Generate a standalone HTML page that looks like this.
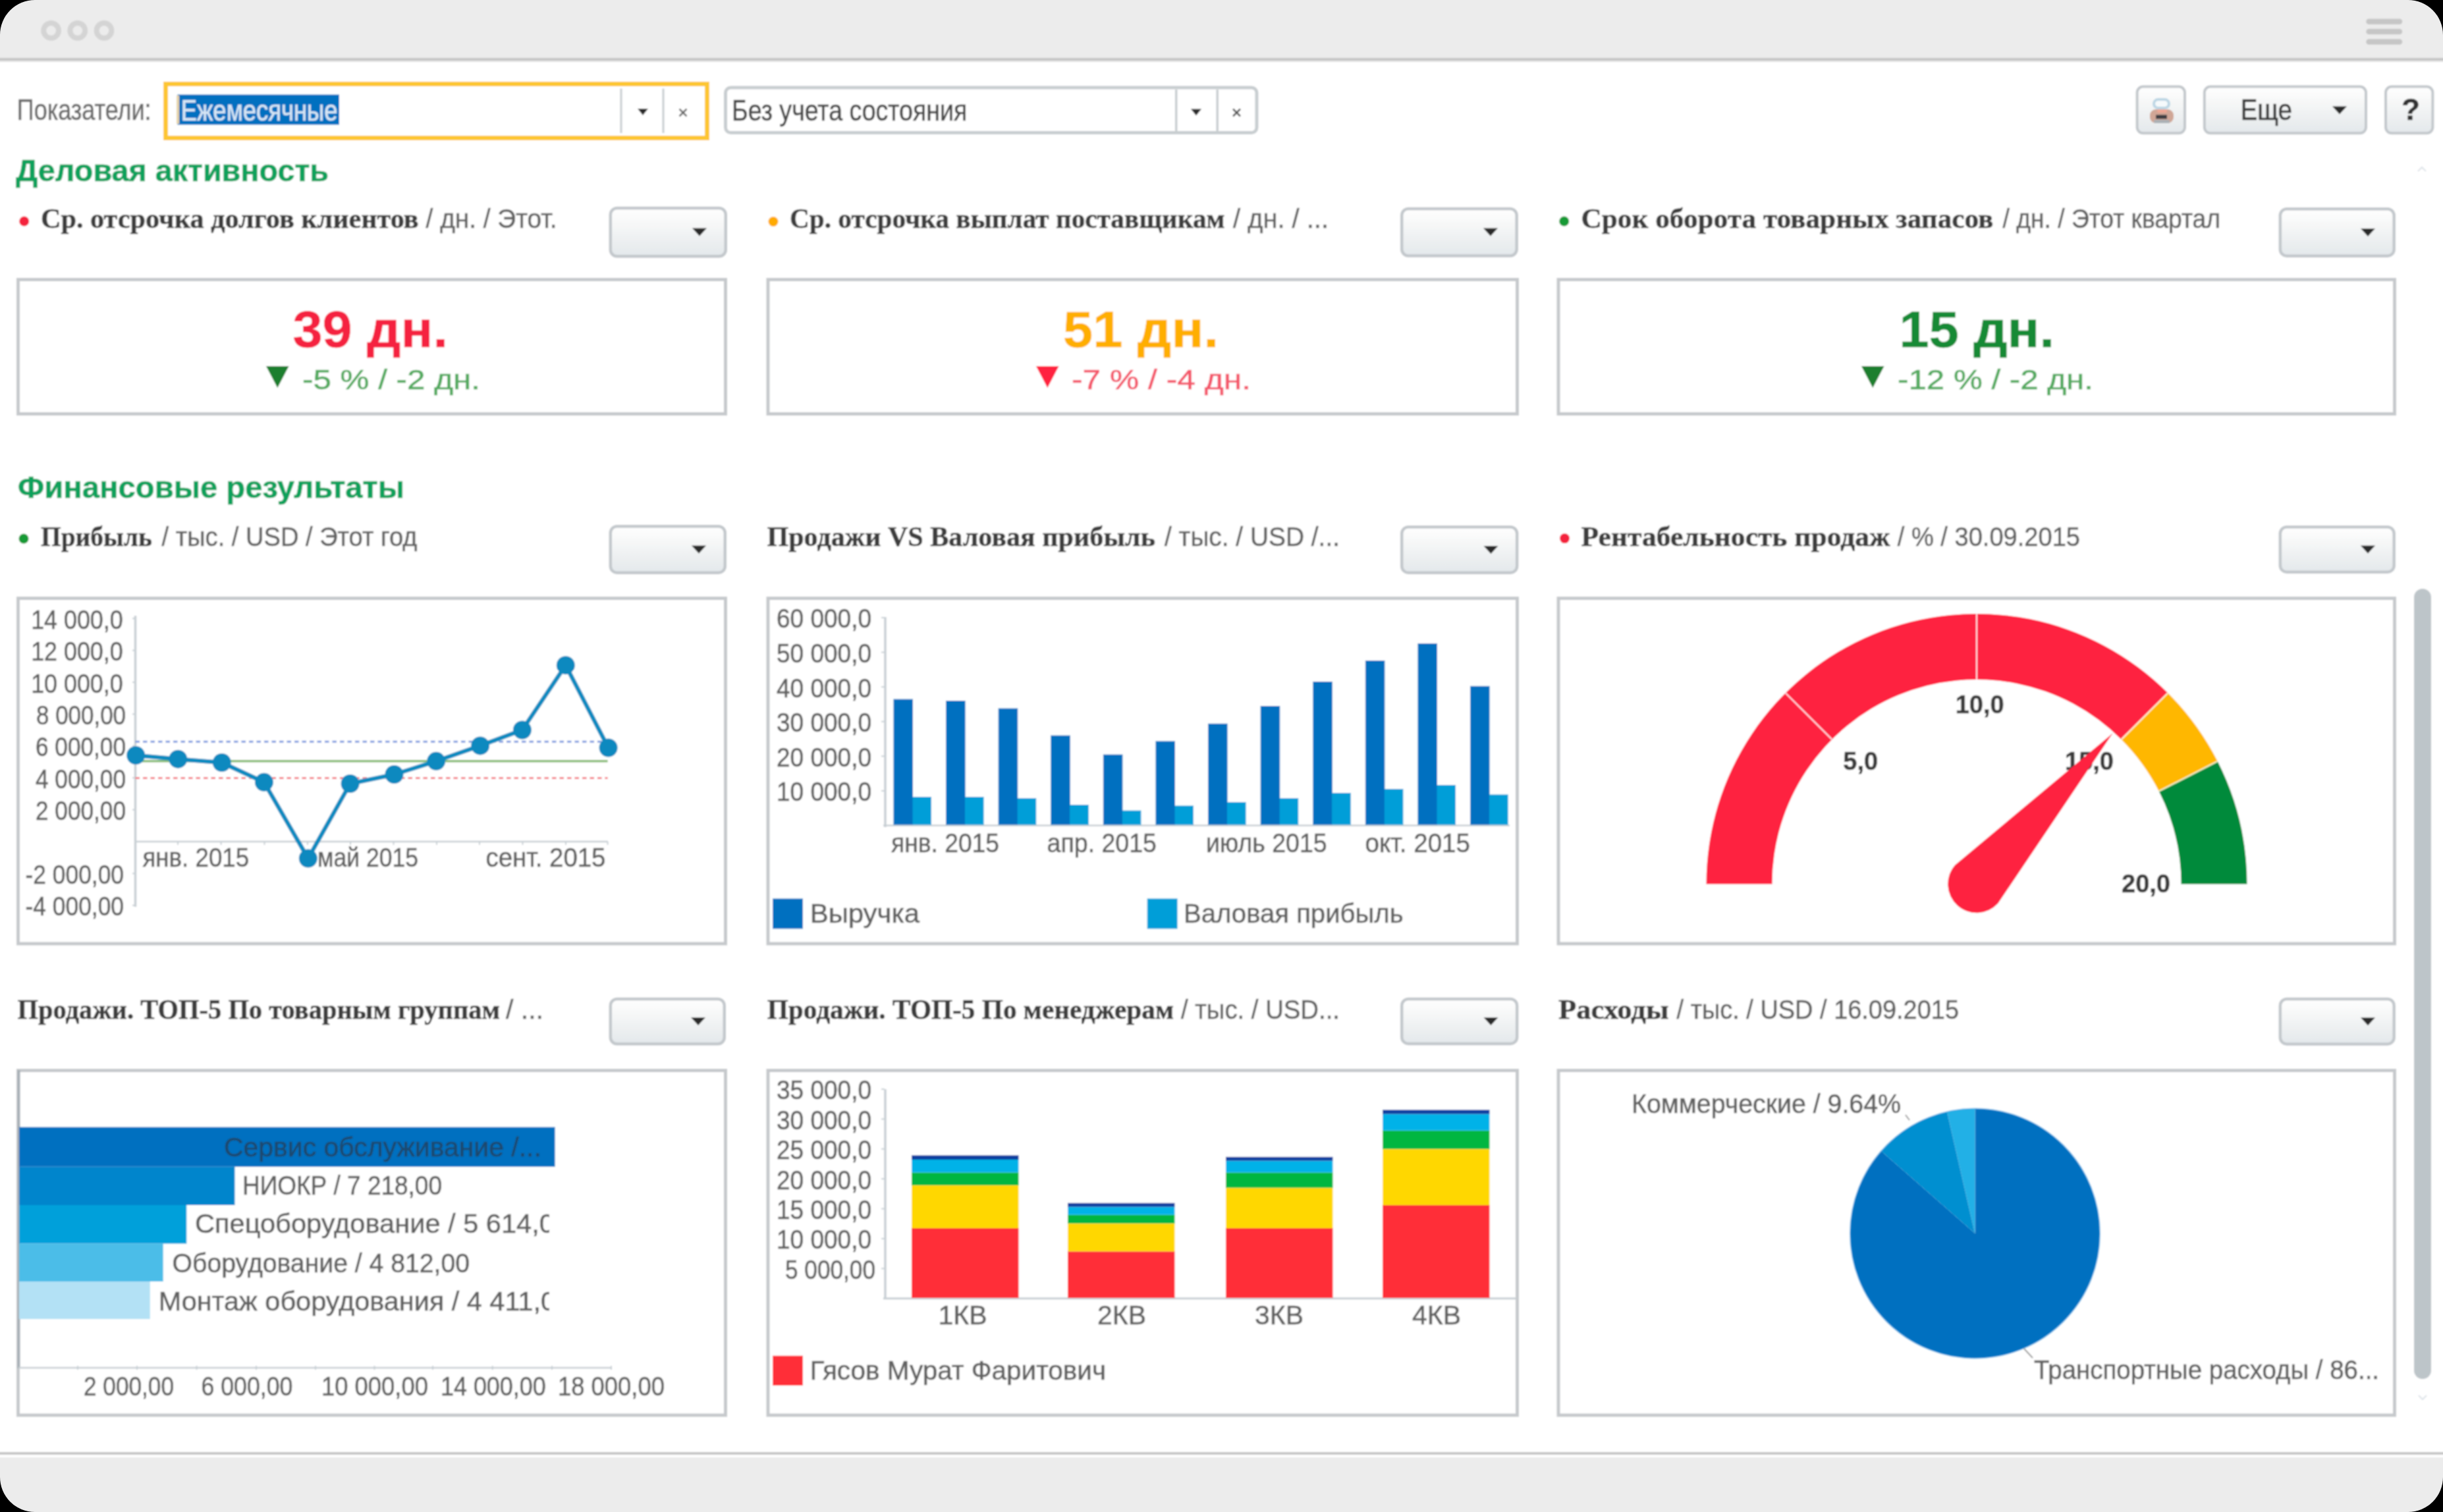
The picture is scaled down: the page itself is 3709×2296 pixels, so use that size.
<!DOCTYPE html>
<html><head><meta charset="utf-8"><title>Dashboard</title>
<style>
html,body{margin:0;padding:0;background:#fff;width:3709px;height:2296px;overflow:hidden}
svg{display:block}
.S{font-family:"Liberation Sans",sans-serif}
.R{font-family:"Liberation Serif",serif}
</style></head><body>
<svg width="3709" height="2296" viewBox="0 0 3709 2296">
<defs>
<linearGradient id="btn" x1="0" y1="0" x2="0" y2="1">
<stop offset="0" stop-color="#ffffff"/><stop offset="0.35" stop-color="#f6f7f7"/><stop offset="1" stop-color="#e3e8eb"/>
</linearGradient>
<filter id="bl" x="-2%" y="-2%" width="104%" height="104%"><feGaussianBlur stdDeviation="1.1"/></filter>
<clipPath id="c1lab"><rect x="0" y="1700" width="834" height="320"/></clipPath>
</defs>
<g filter="url(#bl)">
<rect x="-30.0" y="-30.0" width="3769.0" height="2356.0" fill="#fff"/>
<rect x="-30.0" y="-30.0" width="3769.0" height="118.0" fill="#ececec"/>
<rect x="-30.0" y="88.0" width="3769.0" height="4.0" fill="#c6c6c6"/>
<rect x="-30.0" y="92.0" width="3769.0" height="2.0" fill="#e4e4e4"/>
<circle cx="77.6" cy="46.4" r="11.4" fill="none" stroke="#d4d4d4" stroke-width="8"/>
<circle cx="117.8" cy="46.4" r="11.4" fill="none" stroke="#d4d4d4" stroke-width="8"/>
<circle cx="158" cy="46.4" r="11.4" fill="none" stroke="#d4d4d4" stroke-width="8"/>
<line x1="3596.5" y1="32.8" x2="3643" y2="32.8" stroke="#c6c6c6" stroke-width="8.5" stroke-linecap="round"/>
<line x1="3596.5" y1="48" x2="3643" y2="48" stroke="#c6c6c6" stroke-width="8.5" stroke-linecap="round"/>
<line x1="3596.5" y1="63.5" x2="3643" y2="63.5" stroke="#c6c6c6" stroke-width="8.5" stroke-linecap="round"/>
<rect x="-30.0" y="2205.0" width="3769.0" height="4.0" fill="#c6c6c6"/>
<rect x="-30.0" y="2213.0" width="3769.0" height="113.0" fill="#ececec"/>
<text class="S" x="25.8" y="182.4" font-size="44" fill="#6a6a6a" stroke="#6a6a6a" stroke-width="0.6" textLength="203.8" lengthAdjust="spacingAndGlyphs">Показатели:</text>
<rect x="251.5" y="127.5" width="822.0" height="82.0" fill="#fff" stroke="#fdc631" stroke-width="7"/>
<rect x="269.5" y="143.6" width="245.5" height="45.8" fill="#0070c0"/>
<rect x="268.0" y="145.0" width="4.0" height="43.0" fill="#e6d3a8"/>
<text class="S" x="274.7" y="183.0" font-size="44" fill="#d8e6f5" stroke="#d8e6f5" stroke-width="0.6" textLength="237.8" lengthAdjust="spacingAndGlyphs">Ежемесячные</text>
<rect x="941.5" y="134.5" width="3.0" height="67.5" fill="#c8ccd0"/>
<rect x="1005.5" y="134.5" width="3.0" height="67.5" fill="#c8ccd0"/>
<path d="M968.0,165.0 L984.0,165.0 L976.0,175.0 Z" fill="#2b2b2b"/>
<path d="M1031.5,165.5 L1042.5,176.5 M1042.5,165.5 L1031.5,176.5" stroke="#666" stroke-width="2.5"/>
<rect x="1101.5" y="133.0" width="806.5" height="68.5" fill="#fff" stroke="#c8cdd0" stroke-width="5" rx="8"/>
<text class="S" x="1111.0" y="183.0" font-size="44" fill="#474747" stroke="#474747" stroke-width="0.6" textLength="357.4" lengthAdjust="spacingAndGlyphs">Без учета состояния</text>
<rect x="1784.0" y="136.0" width="3.5" height="63.0" fill="#c8cdd0"/>
<rect x="1846.5" y="136.0" width="3.5" height="63.0" fill="#c8cdd0"/>
<path d="M1808.0,165.5 L1824.0,165.5 L1816.0,175.5 Z" fill="#2b2b2b"/>
<path d="M1872,165.5 L1883,176.5 M1883,165.5 L1872,176.5" stroke="#555" stroke-width="2.8"/>
<rect x="3244.6" y="131.6" width="72.4" height="70.7" fill="url(#btn)" stroke="#c3c8cc" stroke-width="4" rx="9"/>
<rect x="3346.8" y="131.6" width="245.2" height="70.7" fill="url(#btn)" stroke="#c3c8cc" stroke-width="4" rx="9"/>
<rect x="3622.0" y="131.6" width="71.4" height="70.7" fill="url(#btn)" stroke="#c3c8cc" stroke-width="4" rx="9"/>
<text class="S" x="3401.7" y="182.0" font-size="45" fill="#383838" stroke="#383838" stroke-width="0.6" textLength="78.3" lengthAdjust="spacingAndGlyphs">Еще</text>
<path d="M3541.0,161.5 L3563.0,161.5 L3552.0,173.5 Z" fill="#2b2b2b"/>
<text class="S" x="3646.0" y="181.5" font-size="46" fill="#333" stroke="#333" stroke-width="0.6" font-weight="bold" textLength="28.0" lengthAdjust="spacingAndGlyphs">?</text>
<g>
<rect x="3270" y="151" width="23" height="13" rx="6.5" fill="#f6fafc" stroke="#bcd6e4" stroke-width="4"/>
<rect x="3264" y="166" width="36" height="21" rx="9" fill="#d0a696"/>
<rect x="3275" y="166" width="15" height="5" rx="2" fill="#efa592"/>
<rect x="3273" y="174.5" width="17" height="6" fill="#3c3c42"/>
<rect x="3270" y="182" width="24" height="5" rx="2" fill="#aab0b5"/>
</g>
<path d="M3671,260 L3677,254 L3683,260" stroke="#dde3e8" stroke-width="2" fill="none"/>
<text class="S" x="24.0" y="275.0" font-size="46" fill="#0fa15b" stroke="#0fa15b" stroke-width="0.6" font-weight="bold" textLength="475.0" lengthAdjust="spacingAndGlyphs">Деловая активность</text>
<text class="S" x="27.0" y="756.0" font-size="46" fill="#0fa15b" stroke="#0fa15b" stroke-width="0.6" font-weight="bold" textLength="587.0" lengthAdjust="spacingAndGlyphs">Финансовые результаты</text>
<circle cx="36.7" cy="336" r="7.5" fill="#f4203e"/>
<text class="R" x="62.0" y="346.0" font-size="42" fill="#3c3c3c" stroke="#3c3c3c" stroke-width="0.6" font-weight="bold" textLength="573.6" lengthAdjust="spacingAndGlyphs">Ср. отсрочка долгов клиентов</text>
<text class="S" x="646.6" y="346.0" font-size="41" fill="#626262" stroke="#626262" stroke-width="0.6" textLength="199.0" lengthAdjust="spacingAndGlyphs">/ дн. / Этот.</text>
<circle cx="1174" cy="336.5" r="7.5" fill="#ffaa00"/>
<text class="R" x="1199.0" y="346.0" font-size="42" fill="#3c3c3c" stroke="#3c3c3c" stroke-width="0.6" font-weight="bold" textLength="660.7" lengthAdjust="spacingAndGlyphs">Ср. отсрочка выплат поставщикам</text>
<text class="S" x="1872.0" y="346.0" font-size="41" fill="#626262" stroke="#626262" stroke-width="0.6" textLength="145.0" lengthAdjust="spacingAndGlyphs">/ дн. / ...</text>
<circle cx="2374.7" cy="336" r="7.5" fill="#149a36"/>
<text class="R" x="2400.5" y="346.0" font-size="42" fill="#3c3c3c" stroke="#3c3c3c" stroke-width="0.6" font-weight="bold" textLength="626.0" lengthAdjust="spacingAndGlyphs">Срок оборота товарных запасов</text>
<text class="S" x="3040.5" y="346.0" font-size="41" fill="#626262" stroke="#626262" stroke-width="0.6" textLength="330.5" lengthAdjust="spacingAndGlyphs">/ дн. / Этот квартал</text>
<rect x="926.8" y="315.9" width="175.0" height="73.4" fill="url(#btn)" stroke="#c3c8cc" stroke-width="4.5" rx="10"/>
<path d="M1051.0,346.6 L1073.0,346.6 L1062.0,358.6 Z" fill="#2b2b2b"/>
<rect x="2128.2" y="316.9" width="174.5" height="71.6" fill="url(#btn)" stroke="#c3c8cc" stroke-width="4.5" rx="10"/>
<path d="M2252.0,346.6 L2274.0,346.6 L2263.0,358.6 Z" fill="#2b2b2b"/>
<rect x="3461.8" y="317.2" width="172.9" height="71.5" fill="url(#btn)" stroke="#c3c8cc" stroke-width="4.5" rx="10"/>
<path d="M3584.0,347.0 L3606.0,347.0 L3595.0,359.0 Z" fill="#2b2b2b"/>
<circle cx="36" cy="818" r="7.5" fill="#149a36"/>
<text class="R" x="62.0" y="829.0" font-size="42" fill="#3c3c3c" stroke="#3c3c3c" stroke-width="0.6" font-weight="bold" textLength="168.8" lengthAdjust="spacingAndGlyphs">Прибыль</text>
<text class="S" x="245.6" y="829.0" font-size="41" fill="#626262" stroke="#626262" stroke-width="0.6" textLength="388.0" lengthAdjust="spacingAndGlyphs">/ тыс. / USD / Этот год</text>
<text class="R" x="1164.5" y="829.0" font-size="42" fill="#3c3c3c" stroke="#3c3c3c" stroke-width="0.6" font-weight="bold" textLength="589.4" lengthAdjust="spacingAndGlyphs">Продажи VS Валовая прибыль</text>
<text class="S" x="1768.0" y="829.0" font-size="41" fill="#626262" stroke="#626262" stroke-width="0.6" textLength="266.0" lengthAdjust="spacingAndGlyphs">/ тыс. / USD /...</text>
<circle cx="2375.5" cy="817.6" r="7.5" fill="#f4203e"/>
<text class="R" x="2400.5" y="829.0" font-size="42" fill="#3c3c3c" stroke="#3c3c3c" stroke-width="0.6" font-weight="bold" textLength="469.1" lengthAdjust="spacingAndGlyphs">Рентабельность продаж</text>
<text class="S" x="2880.8" y="829.0" font-size="41" fill="#626262" stroke="#626262" stroke-width="0.6" textLength="277.2" lengthAdjust="spacingAndGlyphs">/ % / 30.09.2015</text>
<rect x="926.8" y="799.2" width="174.0" height="70.5" fill="url(#btn)" stroke="#c3c8cc" stroke-width="4.5" rx="10"/>
<path d="M1050.0,828.5 L1072.0,828.5 L1061.0,840.5 Z" fill="#2b2b2b"/>
<rect x="2128.2" y="800.2" width="175.0" height="69.5" fill="url(#btn)" stroke="#c3c8cc" stroke-width="4.5" rx="10"/>
<path d="M2252.5,829.0 L2274.5,829.0 L2263.5,841.0 Z" fill="#2b2b2b"/>
<rect x="3461.8" y="800.2" width="172.9" height="68.5" fill="url(#btn)" stroke="#c3c8cc" stroke-width="4.5" rx="10"/>
<path d="M3584.0,828.5 L3606.0,828.5 L3595.0,840.5 Z" fill="#2b2b2b"/>
<text class="R" x="26.5" y="1547.0" font-size="42" fill="#3c3c3c" stroke="#3c3c3c" stroke-width="0.6" font-weight="bold" textLength="732.5" lengthAdjust="spacingAndGlyphs">Продажи. ТОП-5 По товарным группам</text>
<text class="S" x="768.0" y="1547.0" font-size="41" fill="#626262" stroke="#626262" stroke-width="0.6" textLength="57.0" lengthAdjust="spacingAndGlyphs">/ ...</text>
<text class="R" x="1164.7" y="1547.0" font-size="42" fill="#3c3c3c" stroke="#3c3c3c" stroke-width="0.6" font-weight="bold" textLength="617.3" lengthAdjust="spacingAndGlyphs">Продажи. ТОП-5 По менеджерам</text>
<text class="S" x="1793.0" y="1547.0" font-size="41" fill="#626262" stroke="#626262" stroke-width="0.6" textLength="241.0" lengthAdjust="spacingAndGlyphs">/ тыс. / USD...</text>
<text class="R" x="2366.0" y="1547.0" font-size="42" fill="#3c3c3c" stroke="#3c3c3c" stroke-width="0.6" font-weight="bold" textLength="167.6" lengthAdjust="spacingAndGlyphs">Расходы</text>
<text class="S" x="2545.6" y="1547.0" font-size="41" fill="#626262" stroke="#626262" stroke-width="0.6" textLength="428.4" lengthAdjust="spacingAndGlyphs">/ тыс. / USD / 16.09.2015</text>
<rect x="926.8" y="1517.0" width="173.0" height="68.3" fill="url(#btn)" stroke="#c3c8cc" stroke-width="4.5" rx="10"/>
<path d="M1049.0,1545.1 L1071.0,1545.1 L1060.0,1557.1 Z" fill="#2b2b2b"/>
<rect x="2128.2" y="1517.0" width="175.0" height="67.9" fill="url(#btn)" stroke="#c3c8cc" stroke-width="4.5" rx="10"/>
<path d="M2252.5,1545.0 L2274.5,1545.0 L2263.5,1557.0 Z" fill="#2b2b2b"/>
<rect x="3461.8" y="1517.0" width="172.9" height="68.4" fill="url(#btn)" stroke="#c3c8cc" stroke-width="4.5" rx="10"/>
<path d="M3584.0,1545.2 L3606.0,1545.2 L3595.0,1557.2 Z" fill="#2b2b2b"/>
<rect x="27.5" y="424.5" width="1074.0" height="204.0" fill="#fff" stroke="#c6c9cc" stroke-width="5"/>
<rect x="27.5" y="908.5" width="1074.0" height="524.5" fill="#fff" stroke="#c6c9cc" stroke-width="5"/>
<rect x="27.5" y="1625.5" width="1074.0" height="523.5" fill="#fff" stroke="#c6c9cc" stroke-width="5"/>
<rect x="1166.0" y="424.5" width="1137.5" height="204.0" fill="#fff" stroke="#c6c9cc" stroke-width="5"/>
<rect x="1166.0" y="908.5" width="1137.5" height="524.5" fill="#fff" stroke="#c6c9cc" stroke-width="5"/>
<rect x="1166.0" y="1625.5" width="1137.5" height="523.5" fill="#fff" stroke="#c6c9cc" stroke-width="5"/>
<rect x="2366.0" y="424.5" width="1269.5" height="204.0" fill="#fff" stroke="#c6c9cc" stroke-width="5"/>
<rect x="2366.0" y="908.5" width="1269.5" height="524.5" fill="#fff" stroke="#c6c9cc" stroke-width="5"/>
<rect x="2366.0" y="1625.5" width="1269.5" height="523.5" fill="#fff" stroke="#c6c9cc" stroke-width="5"/>
<rect x="3665.0" y="894.0" width="26.0" height="1200.0" fill="#bdc5c9" rx="13"/>
<path d="M3672,2119 L3678,2125 L3684,2119" stroke="#dde3e8" stroke-width="2" fill="none"/>
<text class="S" x="444.5" y="526.7" font-size="78" fill="#f5203f" stroke="#f5203f" stroke-width="0.6" font-weight="bold" textLength="235.5" lengthAdjust="spacingAndGlyphs">39 дн.</text>
<path d="M404.0,556 L438.6,556 L421.3,589 Z" fill="#1a7f2e"/>
<text class="S" x="459.0" y="590.6" font-size="43" fill="#52aa5e" stroke="#52aa5e" stroke-width="0.6" textLength="270.0" lengthAdjust="spacingAndGlyphs">-5 % / -2 дн.</text>
<text class="S" x="1614.0" y="526.7" font-size="78" fill="#ffae00" stroke="#ffae00" stroke-width="0.6" font-weight="bold" textLength="236.0" lengthAdjust="spacingAndGlyphs">51 дн.</text>
<path d="M1573.0,556 L1607.6,556 L1590.3,589 Z" fill="#ff2040"/>
<text class="S" x="1627.0" y="590.6" font-size="43" fill="#f4566a" stroke="#f4566a" stroke-width="0.6" textLength="272.0" lengthAdjust="spacingAndGlyphs">-7 % / -4 дн.</text>
<text class="S" x="2883.6" y="526.7" font-size="78" fill="#138a36" stroke="#138a36" stroke-width="0.6" font-weight="bold" textLength="235.4" lengthAdjust="spacingAndGlyphs">15 дн.</text>
<path d="M2826.0,556 L2860.6,556 L2843.3,589 Z" fill="#1a7f2e"/>
<text class="S" x="2881.0" y="590.6" font-size="43" fill="#52aa5e" stroke="#52aa5e" stroke-width="0.6" textLength="297.0" lengthAdjust="spacingAndGlyphs">-12 % / -2 дн.</text>
<line x1="205.5" y1="935" x2="205.5" y2="1377" stroke="#c8cfd4" stroke-width="3.5"/>
<line x1="204" y1="1278" x2="923" y2="1278" stroke="#c8cfd4" stroke-width="2.5"/>
<line x1="270" y1="1278" x2="270" y2="1283" stroke="#c8cfd4" stroke-width="2"/>
<line x1="335.6" y1="1278" x2="335.6" y2="1283" stroke="#c8cfd4" stroke-width="2"/>
<line x1="401.5" y1="1278" x2="401.5" y2="1283" stroke="#c8cfd4" stroke-width="2"/>
<line x1="466.9" y1="1278" x2="466.9" y2="1283" stroke="#c8cfd4" stroke-width="2"/>
<line x1="532" y1="1278" x2="532" y2="1283" stroke="#c8cfd4" stroke-width="2"/>
<line x1="597.5" y1="1278" x2="597.5" y2="1283" stroke="#c8cfd4" stroke-width="2"/>
<line x1="663" y1="1278" x2="663" y2="1283" stroke="#c8cfd4" stroke-width="2"/>
<line x1="728" y1="1278" x2="728" y2="1283" stroke="#c8cfd4" stroke-width="2"/>
<line x1="793.5" y1="1278" x2="793.5" y2="1283" stroke="#c8cfd4" stroke-width="2"/>
<line x1="859" y1="1278" x2="859" y2="1283" stroke="#c8cfd4" stroke-width="2"/>
<line x1="922.6" y1="1278" x2="922.6" y2="1283" stroke="#c8cfd4" stroke-width="2"/>
<line x1="201" y1="1374.8" x2="205.5" y2="1374.8" stroke="#c8cfd4" stroke-width="2"/>
<line x1="201" y1="1326.4" x2="205.5" y2="1326.4" stroke="#c8cfd4" stroke-width="2"/>
<line x1="201" y1="1229.6" x2="205.5" y2="1229.6" stroke="#c8cfd4" stroke-width="2"/>
<line x1="201" y1="1181.2" x2="205.5" y2="1181.2" stroke="#c8cfd4" stroke-width="2"/>
<line x1="201" y1="1132.8" x2="205.5" y2="1132.8" stroke="#c8cfd4" stroke-width="2"/>
<line x1="201" y1="1084.4" x2="205.5" y2="1084.4" stroke="#c8cfd4" stroke-width="2"/>
<line x1="201" y1="1036.0" x2="205.5" y2="1036.0" stroke="#c8cfd4" stroke-width="2"/>
<line x1="201" y1="987.6" x2="205.5" y2="987.6" stroke="#c8cfd4" stroke-width="2"/>
<line x1="201" y1="939.2" x2="205.5" y2="939.2" stroke="#c8cfd4" stroke-width="2"/>
<text class="S" x="47.2" y="954.7" font-size="41" fill="#606060" stroke="#606060" stroke-width="0.6" textLength="139.5" lengthAdjust="spacingAndGlyphs">14 000,0</text>
<text class="S" x="47.2" y="1003.1" font-size="41" fill="#606060" stroke="#606060" stroke-width="0.6" textLength="139.5" lengthAdjust="spacingAndGlyphs">12 000,0</text>
<text class="S" x="47.2" y="1051.5" font-size="41" fill="#606060" stroke="#606060" stroke-width="0.6" textLength="139.5" lengthAdjust="spacingAndGlyphs">10 000,0</text>
<text class="S" x="55.0" y="1099.9" font-size="41" fill="#606060" stroke="#606060" stroke-width="0.6" textLength="136.0" lengthAdjust="spacingAndGlyphs">8 000,00</text>
<text class="S" x="54.0" y="1148.3" font-size="41" fill="#606060" stroke="#606060" stroke-width="0.6" textLength="137.0" lengthAdjust="spacingAndGlyphs">6 000,00</text>
<text class="S" x="54.0" y="1196.7" font-size="41" fill="#606060" stroke="#606060" stroke-width="0.6" textLength="137.0" lengthAdjust="spacingAndGlyphs">4 000,00</text>
<text class="S" x="54.0" y="1245.1" font-size="41" fill="#606060" stroke="#606060" stroke-width="0.6" textLength="137.0" lengthAdjust="spacingAndGlyphs">2 000,00</text>
<text class="S" x="38.6" y="1341.9" font-size="41" fill="#606060" stroke="#606060" stroke-width="0.6" textLength="149.4" lengthAdjust="spacingAndGlyphs">-2 000,00</text>
<text class="S" x="38.6" y="1390.3" font-size="41" fill="#606060" stroke="#606060" stroke-width="0.6" textLength="149.4" lengthAdjust="spacingAndGlyphs">-4 000,00</text>
<line x1="205.5" y1="1126.2" x2="922.6" y2="1126.2" stroke="#7f9be0" stroke-width="3" stroke-dasharray="6.5,5"/>
<line x1="205.5" y1="1155.8" x2="922.6" y2="1155.8" stroke="#86bb74" stroke-width="3.5"/>
<line x1="205.5" y1="1181.6" x2="922.6" y2="1181.6" stroke="#f47f86" stroke-width="3" stroke-dasharray="6.5,5"/>
<polyline points="206.2,1147 270.3,1152.7 336.8,1158 400.9,1187.8 467.8,1303.5 531.6,1190 598.5,1176 662.2,1155.8 729.1,1132.4 792.9,1108.5 858.8,1010.2 923.6,1135.5" fill="none" stroke="#0f8bc0" stroke-width="6.5" stroke-linejoin="round"/>
<circle cx="206.2" cy="1147" r="14" fill="#0d89bf"/>
<circle cx="270.3" cy="1152.7" r="14" fill="#0d89bf"/>
<circle cx="336.8" cy="1158" r="14" fill="#0d89bf"/>
<circle cx="400.9" cy="1187.8" r="14" fill="#0d89bf"/>
<circle cx="467.8" cy="1303.5" r="14" fill="#0d89bf"/>
<circle cx="531.6" cy="1190" r="14" fill="#0d89bf"/>
<circle cx="598.5" cy="1176" r="14" fill="#0d89bf"/>
<circle cx="662.2" cy="1155.8" r="14" fill="#0d89bf"/>
<circle cx="729.1" cy="1132.4" r="14" fill="#0d89bf"/>
<circle cx="792.9" cy="1108.5" r="14" fill="#0d89bf"/>
<circle cx="858.8" cy="1010.2" r="14" fill="#0d89bf"/>
<circle cx="923.6" cy="1135.5" r="14" fill="#0d89bf"/>
<text class="S" x="216.4" y="1316.0" font-size="41" fill="#606060" stroke="#606060" stroke-width="0.6" textLength="161.8" lengthAdjust="spacingAndGlyphs">янв. 2015</text>
<text class="S" x="482.0" y="1316.0" font-size="41" fill="#606060" stroke="#606060" stroke-width="0.6" textLength="152.9" lengthAdjust="spacingAndGlyphs">май 2015</text>
<text class="S" x="737.5" y="1316.0" font-size="41" fill="#606060" stroke="#606060" stroke-width="0.6" textLength="182.0" lengthAdjust="spacingAndGlyphs">сент. 2015</text>
<line x1="1344" y1="937" x2="1344" y2="1256" stroke="#c8cfd4" stroke-width="3.5"/>
<line x1="1341" y1="1253.5" x2="2292" y2="1253.5" stroke="#c8cfd4" stroke-width="2.5"/>
<text class="S" x="1179.0" y="953.4" font-size="41" fill="#606060" stroke="#606060" stroke-width="0.6" textLength="144.0" lengthAdjust="spacingAndGlyphs">60 000,0</text>
<line x1="1338" y1="937.9" x2="1343" y2="937.9" stroke="#c8cfd4" stroke-width="2"/>
<text class="S" x="1179.0" y="1006.0" font-size="41" fill="#606060" stroke="#606060" stroke-width="0.6" textLength="144.0" lengthAdjust="spacingAndGlyphs">50 000,0</text>
<line x1="1338" y1="990.5" x2="1343" y2="990.5" stroke="#c8cfd4" stroke-width="2"/>
<text class="S" x="1179.0" y="1058.6" font-size="41" fill="#606060" stroke="#606060" stroke-width="0.6" textLength="144.0" lengthAdjust="spacingAndGlyphs">40 000,0</text>
<line x1="1338" y1="1043.1" x2="1343" y2="1043.1" stroke="#c8cfd4" stroke-width="2"/>
<text class="S" x="1179.0" y="1111.2" font-size="41" fill="#606060" stroke="#606060" stroke-width="0.6" textLength="144.0" lengthAdjust="spacingAndGlyphs">30 000,0</text>
<line x1="1338" y1="1095.7" x2="1343" y2="1095.7" stroke="#c8cfd4" stroke-width="2"/>
<text class="S" x="1179.0" y="1163.8" font-size="41" fill="#606060" stroke="#606060" stroke-width="0.6" textLength="144.0" lengthAdjust="spacingAndGlyphs">20 000,0</text>
<line x1="1338" y1="1148.3" x2="1343" y2="1148.3" stroke="#c8cfd4" stroke-width="2"/>
<text class="S" x="1179.0" y="1216.4" font-size="41" fill="#606060" stroke="#606060" stroke-width="0.6" textLength="144.0" lengthAdjust="spacingAndGlyphs">10 000,0</text>
<line x1="1338" y1="1200.9" x2="1343" y2="1200.9" stroke="#c8cfd4" stroke-width="2"/>
<rect x="1356.5" y="1061.6" width="29.5" height="190.9" fill="#0070c0"/>
<rect x="1385.5" y="1210.0" width="28.5" height="42.5" fill="#009ed8"/>
<rect x="1436.1" y="1064.0" width="29.5" height="188.5" fill="#0070c0"/>
<rect x="1465.1" y="1210.0" width="28.5" height="42.5" fill="#009ed8"/>
<rect x="1515.7" y="1075.6" width="29.5" height="176.9" fill="#0070c0"/>
<rect x="1544.7" y="1212.0" width="28.5" height="40.5" fill="#009ed8"/>
<rect x="1595.3" y="1116.7" width="29.5" height="135.8" fill="#0070c0"/>
<rect x="1624.3" y="1222.0" width="28.5" height="30.5" fill="#009ed8"/>
<rect x="1674.9" y="1145.7" width="29.5" height="106.8" fill="#0070c0"/>
<rect x="1703.9" y="1230.7" width="28.5" height="21.8" fill="#009ed8"/>
<rect x="1754.5" y="1125.4" width="29.5" height="127.1" fill="#0070c0"/>
<rect x="1783.5" y="1223.4" width="28.5" height="29.1" fill="#009ed8"/>
<rect x="1834.1" y="1098.8" width="29.5" height="153.7" fill="#0070c0"/>
<rect x="1863.1" y="1218.0" width="28.5" height="34.5" fill="#009ed8"/>
<rect x="1913.7" y="1072.0" width="29.5" height="180.5" fill="#0070c0"/>
<rect x="1942.7" y="1212.0" width="28.5" height="40.5" fill="#009ed8"/>
<rect x="1993.3" y="1035.0" width="29.5" height="217.5" fill="#0070c0"/>
<rect x="2022.3" y="1204.0" width="28.5" height="48.5" fill="#009ed8"/>
<rect x="2072.9" y="1003.0" width="29.5" height="249.5" fill="#0070c0"/>
<rect x="2101.9" y="1198.0" width="28.5" height="54.5" fill="#009ed8"/>
<rect x="2152.5" y="977.0" width="29.5" height="275.5" fill="#0070c0"/>
<rect x="2181.5" y="1192.0" width="28.5" height="60.5" fill="#009ed8"/>
<rect x="2232.1" y="1041.8" width="29.5" height="210.7" fill="#0070c0"/>
<rect x="2261.1" y="1206.5" width="28.5" height="46.0" fill="#009ed8"/>
<text class="S" x="1353.0" y="1294.0" font-size="41" fill="#606060" stroke="#606060" stroke-width="0.6" textLength="164.0" lengthAdjust="spacingAndGlyphs">янв. 2015</text>
<text class="S" x="1589.6" y="1294.0" font-size="41" fill="#606060" stroke="#606060" stroke-width="0.6" textLength="166.4" lengthAdjust="spacingAndGlyphs">апр. 2015</text>
<text class="S" x="1831.0" y="1294.0" font-size="41" fill="#606060" stroke="#606060" stroke-width="0.6" textLength="183.7" lengthAdjust="spacingAndGlyphs">июль 2015</text>
<text class="S" x="2072.6" y="1294.0" font-size="41" fill="#606060" stroke="#606060" stroke-width="0.6" textLength="159.4" lengthAdjust="spacingAndGlyphs">окт. 2015</text>
<rect x="1173.0" y="1364.5" width="46.0" height="45.9" fill="#0070c0"/>
<text class="S" x="1229.7" y="1401.0" font-size="41" fill="#606060" stroke="#606060" stroke-width="0.6" textLength="166.3" lengthAdjust="spacingAndGlyphs">Выручка</text>
<rect x="1741.7" y="1364.5" width="45.9" height="45.9" fill="#009ed8"/>
<text class="S" x="1797.0" y="1401.0" font-size="41" fill="#606060" stroke="#606060" stroke-width="0.6" textLength="333.6" lengthAdjust="spacingAndGlyphs">Валовая прибыль</text>
<path d="M2590.5,1342.5 A410.5,410.5 0 0 1 3291.3,1052.2 L3220.6,1122.9 A310.5,310.5 0 0 0 2690.5,1342.5 Z" fill="#fe2140"/>
<path d="M3291.3,1052.2 A410.5,410.5 0 0 1 3366.8,1156.1 L3277.7,1201.5 A310.5,310.5 0 0 0 3220.6,1122.9 Z" fill="#ffb700"/>
<path d="M3366.8,1156.1 A410.5,410.5 0 0 1 3411.5,1342.5 L3311.5,1342.5 A310.5,310.5 0 0 0 3277.7,1201.5 Z" fill="#008a3a"/>
<line x1="2781.4" y1="1122.9" x2="2710.7" y2="1052.2" stroke="#ffd9dd" stroke-width="2.2"/>
<line x1="3001.0" y1="1032.0" x2="3001.0" y2="932.0" stroke="#ffd9dd" stroke-width="2.2"/>
<line x1="3220.6" y1="1122.9" x2="3291.3" y2="1052.2" stroke="#fff0d8" stroke-width="2.2"/>
<line x1="3277.7" y1="1201.5" x2="3366.8" y2="1156.1" stroke="#f2f0c8" stroke-width="2.2"/>
<text class="S" x="3005.7" y="1082.5" font-size="38" fill="#3a3a3a" stroke="#3a3a3a" stroke-width="0.6" font-weight="bold" text-anchor="middle">10,0</text>
<text class="S" x="2824.7" y="1169.0" font-size="38" fill="#3a3a3a" stroke="#3a3a3a" stroke-width="0.6" font-weight="bold" text-anchor="middle">5,0</text>
<text class="S" x="3172.0" y="1169.0" font-size="38" fill="#3a3a3a" stroke="#3a3a3a" stroke-width="0.6" font-weight="bold" text-anchor="middle">15,0</text>
<text class="S" x="3258.0" y="1354.5" font-size="38" fill="#3a3a3a" stroke="#3a3a3a" stroke-width="0.6" font-weight="bold" text-anchor="middle">20,0</text>
<path d="M3207.5,1113.4 L3033.5,1371.8 A43.7,43.7 0 1 1 2968.5,1313.2 Z" fill="#fe2140"/>
<line x1="28.5" y1="1625" x2="28.5" y2="2078" stroke="#a7b0b6" stroke-width="4"/>
<line x1="28" y1="2077" x2="928" y2="2077" stroke="#c8cfd4" stroke-width="2.5"/>
<line x1="118" y1="2074" x2="118" y2="2080" stroke="#c8cfd4" stroke-width="2"/>
<line x1="208" y1="2074" x2="208" y2="2080" stroke="#c8cfd4" stroke-width="2"/>
<line x1="298.6" y1="2074" x2="298.6" y2="2080" stroke="#c8cfd4" stroke-width="2"/>
<line x1="389" y1="2074" x2="389" y2="2080" stroke="#c8cfd4" stroke-width="2"/>
<line x1="479" y1="2074" x2="479" y2="2080" stroke="#c8cfd4" stroke-width="2"/>
<line x1="568.5" y1="2074" x2="568.5" y2="2080" stroke="#c8cfd4" stroke-width="2"/>
<line x1="657" y1="2074" x2="657" y2="2080" stroke="#c8cfd4" stroke-width="2"/>
<line x1="747.7" y1="2074" x2="747.7" y2="2080" stroke="#c8cfd4" stroke-width="2"/>
<line x1="838" y1="2074" x2="838" y2="2080" stroke="#c8cfd4" stroke-width="2"/>
<line x1="928" y1="2074" x2="928" y2="2080" stroke="#c8cfd4" stroke-width="2"/>
<rect x="29.0" y="1711.5" width="813.6" height="60.2" fill="#0070c0"/>
<rect x="29.0" y="1771.7" width="327.5" height="58.3" fill="#0085cc"/>
<rect x="29.0" y="1830.0" width="254.3" height="58.5" fill="#00a0da"/>
<rect x="29.0" y="1888.5" width="218.7" height="57.5" fill="#4bbde8"/>
<rect x="29.0" y="1946.0" width="198.8" height="57.0" fill="#b3e1f5"/>
<g clip-path="url(#c1lab)">
<text class="S" x="340.0" y="1756.0" font-size="41" fill="#1d4a6e" stroke="#1d4a6e" stroke-width="0.6" textLength="481.8" lengthAdjust="spacingAndGlyphs">Сервис обслуживание /...</text>
<text class="S" x="368.0" y="1814.0" font-size="41" fill="#606060" stroke="#606060" stroke-width="0.6" textLength="303.0" lengthAdjust="spacingAndGlyphs">НИОКР / 7 218,00</text>
<text class="S" x="296.0" y="1872.0" font-size="41" fill="#606060" stroke="#606060" stroke-width="0.6" textLength="569.0" lengthAdjust="spacingAndGlyphs">Спецоборудование / 5 614,00</text>
<text class="S" x="261.6" y="1932.0" font-size="41" fill="#606060" stroke="#606060" stroke-width="0.6" textLength="451.4" lengthAdjust="spacingAndGlyphs">Оборудование / 4 812,00</text>
<text class="S" x="240.7" y="1990.0" font-size="41" fill="#606060" stroke="#606060" stroke-width="0.6" textLength="626.3" lengthAdjust="spacingAndGlyphs">Монтаж оборудования / 4 411,00</text>
</g>
<text class="S" x="127.0" y="2119.0" font-size="41" fill="#606060" stroke="#606060" stroke-width="0.6" textLength="137.0" lengthAdjust="spacingAndGlyphs">2 000,00</text>
<text class="S" x="305.5" y="2119.0" font-size="41" fill="#606060" stroke="#606060" stroke-width="0.6" textLength="138.9" lengthAdjust="spacingAndGlyphs">6 000,00</text>
<text class="S" x="488.0" y="2119.0" font-size="41" fill="#606060" stroke="#606060" stroke-width="0.6" textLength="162.0" lengthAdjust="spacingAndGlyphs">10 000,00</text>
<text class="S" x="669.0" y="2119.0" font-size="41" fill="#606060" stroke="#606060" stroke-width="0.6" textLength="159.7" lengthAdjust="spacingAndGlyphs">14 000,00</text>
<text class="S" x="847.0" y="2119.0" font-size="41" fill="#606060" stroke="#606060" stroke-width="0.6" textLength="162.0" lengthAdjust="spacingAndGlyphs">18 000,00</text>
<line x1="1344" y1="1654" x2="1344" y2="1973" stroke="#c8cfd4" stroke-width="3.5"/>
<line x1="1341" y1="1971.7" x2="2302" y2="1971.7" stroke="#c8cfd4" stroke-width="3"/>
<text class="S" x="1179.0" y="1669.4" font-size="41" fill="#606060" stroke="#606060" stroke-width="0.6" textLength="144.0" lengthAdjust="spacingAndGlyphs">35 000,0</text>
<line x1="1338" y1="1653.9" x2="1343" y2="1653.9" stroke="#c8cfd4" stroke-width="2"/>
<text class="S" x="1179.0" y="1714.8" font-size="41" fill="#606060" stroke="#606060" stroke-width="0.6" textLength="144.0" lengthAdjust="spacingAndGlyphs">30 000,0</text>
<line x1="1338" y1="1699.3" x2="1343" y2="1699.3" stroke="#c8cfd4" stroke-width="2"/>
<text class="S" x="1179.0" y="1760.2" font-size="41" fill="#606060" stroke="#606060" stroke-width="0.6" textLength="144.0" lengthAdjust="spacingAndGlyphs">25 000,0</text>
<line x1="1338" y1="1744.7" x2="1343" y2="1744.7" stroke="#c8cfd4" stroke-width="2"/>
<text class="S" x="1179.0" y="1805.6" font-size="41" fill="#606060" stroke="#606060" stroke-width="0.6" textLength="144.0" lengthAdjust="spacingAndGlyphs">20 000,0</text>
<line x1="1338" y1="1790.1" x2="1343" y2="1790.1" stroke="#c8cfd4" stroke-width="2"/>
<text class="S" x="1179.0" y="1851.0" font-size="41" fill="#606060" stroke="#606060" stroke-width="0.6" textLength="144.0" lengthAdjust="spacingAndGlyphs">15 000,0</text>
<line x1="1338" y1="1835.5" x2="1343" y2="1835.5" stroke="#c8cfd4" stroke-width="2"/>
<text class="S" x="1179.0" y="1896.4" font-size="41" fill="#606060" stroke="#606060" stroke-width="0.6" textLength="144.0" lengthAdjust="spacingAndGlyphs">10 000,0</text>
<line x1="1338" y1="1880.9" x2="1343" y2="1880.9" stroke="#c8cfd4" stroke-width="2"/>
<text class="S" x="1192.0" y="1941.8" font-size="41" fill="#606060" stroke="#606060" stroke-width="0.6" textLength="137.0" lengthAdjust="spacingAndGlyphs">5 000,00</text>
<line x1="1338" y1="1926.3" x2="1343" y2="1926.3" stroke="#c8cfd4" stroke-width="2"/>
<rect x="1384.0" y="1865.0" width="162.5" height="106.0" fill="#ff2f37"/>
<rect x="1384.0" y="1799.8" width="162.5" height="65.2" fill="#ffd700"/>
<rect x="1384.0" y="1780.5" width="162.5" height="19.3" fill="#00b640"/>
<rect x="1384.0" y="1761.0" width="162.5" height="19.5" fill="#00b2e8"/>
<rect x="1384.0" y="1754.4" width="162.5" height="6.6" fill="#0d3fa0"/>
<rect x="1621.0" y="1900.3" width="162.5" height="70.7" fill="#ff2f37"/>
<rect x="1621.0" y="1857.7" width="162.5" height="42.6" fill="#ffd700"/>
<rect x="1621.0" y="1844.7" width="162.5" height="13.0" fill="#00b640"/>
<rect x="1621.0" y="1832.6" width="162.5" height="12.1" fill="#00b2e8"/>
<rect x="1621.0" y="1826.8" width="162.5" height="5.8" fill="#0d3fa0"/>
<rect x="1861.0" y="1865.0" width="162.5" height="106.0" fill="#ff2f37"/>
<rect x="1861.0" y="1803.6" width="162.5" height="61.4" fill="#ffd700"/>
<rect x="1861.0" y="1780.5" width="162.5" height="23.1" fill="#00b640"/>
<rect x="1861.0" y="1762.6" width="162.5" height="17.9" fill="#00b2e8"/>
<rect x="1861.0" y="1756.8" width="162.5" height="5.8" fill="#0d3fa0"/>
<rect x="2099.0" y="1830.0" width="162.5" height="141.0" fill="#ff2f37"/>
<rect x="2099.0" y="1744.7" width="162.5" height="85.3" fill="#ffd700"/>
<rect x="2099.0" y="1716.7" width="162.5" height="28.0" fill="#00b640"/>
<rect x="2099.0" y="1691.6" width="162.5" height="25.1" fill="#00b2e8"/>
<rect x="2099.0" y="1685.3" width="162.5" height="6.3" fill="#0d3fa0"/>
<text class="S" x="1461.6" y="2011.0" font-size="41" fill="#606060" stroke="#606060" stroke-width="0.6" text-anchor="middle">1КВ</text>
<text class="S" x="1703.0" y="2011.0" font-size="41" fill="#606060" stroke="#606060" stroke-width="0.6" text-anchor="middle">2КВ</text>
<text class="S" x="1942.0" y="2011.0" font-size="41" fill="#606060" stroke="#606060" stroke-width="0.6" text-anchor="middle">3КВ</text>
<text class="S" x="2181.0" y="2011.0" font-size="41" fill="#606060" stroke="#606060" stroke-width="0.6" text-anchor="middle">4КВ</text>
<rect x="1173.0" y="2058.7" width="46.0" height="45.3" fill="#ff2f37"/>
<text class="S" x="1229.7" y="2095.0" font-size="41" fill="#606060" stroke="#606060" stroke-width="0.6" textLength="449.3" lengthAdjust="spacingAndGlyphs">Гясов Мурат Фаритович</text>
<path d="M2998.5,1873 L2998.5,1683.5 A189.5,189.5 0 1 1 2856.1,1747.9 Z" fill="#0070c0"/>
<path d="M2998.5,1873 L2856.1,1747.9 A189.5,189.5 0 0 1 2956.2,1688.3 Z" fill="#008fd0"/>
<path d="M2998.5,1873 L2956.2,1688.3 A189.5,189.5 0 0 1 2998.5,1683.5 Z" fill="#22b0e6"/>
<circle cx="2998.5" cy="1873" r="189.5" fill="none" stroke="#2a9fe0" stroke-opacity="0.6" stroke-width="2"/>
<text class="S" x="2477.0" y="1690.0" font-size="41" fill="#606060" stroke="#606060" stroke-width="0.6" textLength="409.0" lengthAdjust="spacingAndGlyphs">Коммерческие / 9.64%</text>
<line x1="2893" y1="1693" x2="2899" y2="1701" stroke="#999" stroke-width="2"/>
<text class="S" x="3088.0" y="2093.5" font-size="41" fill="#606060" stroke="#606060" stroke-width="0.6" textLength="524.0" lengthAdjust="spacingAndGlyphs">Транспортные расходы / 86...</text>
<line x1="3073" y1="2048" x2="3086" y2="2062" stroke="#999" stroke-width="2"/>
</g>
<path d="M0,0 L53,0 A53,53 0 0 0 0,53 Z" fill="#000"/>
<path d="M3709,0 L3656,0 A53,53 0 0 1 3709,53 Z" fill="#000"/>
<path d="M0,2296 L53,2296 A53,53 0 0 1 0,2243 Z" fill="#000"/>
<path d="M3709,2296 L3656,2296 A53,53 0 0 0 3709,2243 Z" fill="#000"/>
</svg>
</body></html>
